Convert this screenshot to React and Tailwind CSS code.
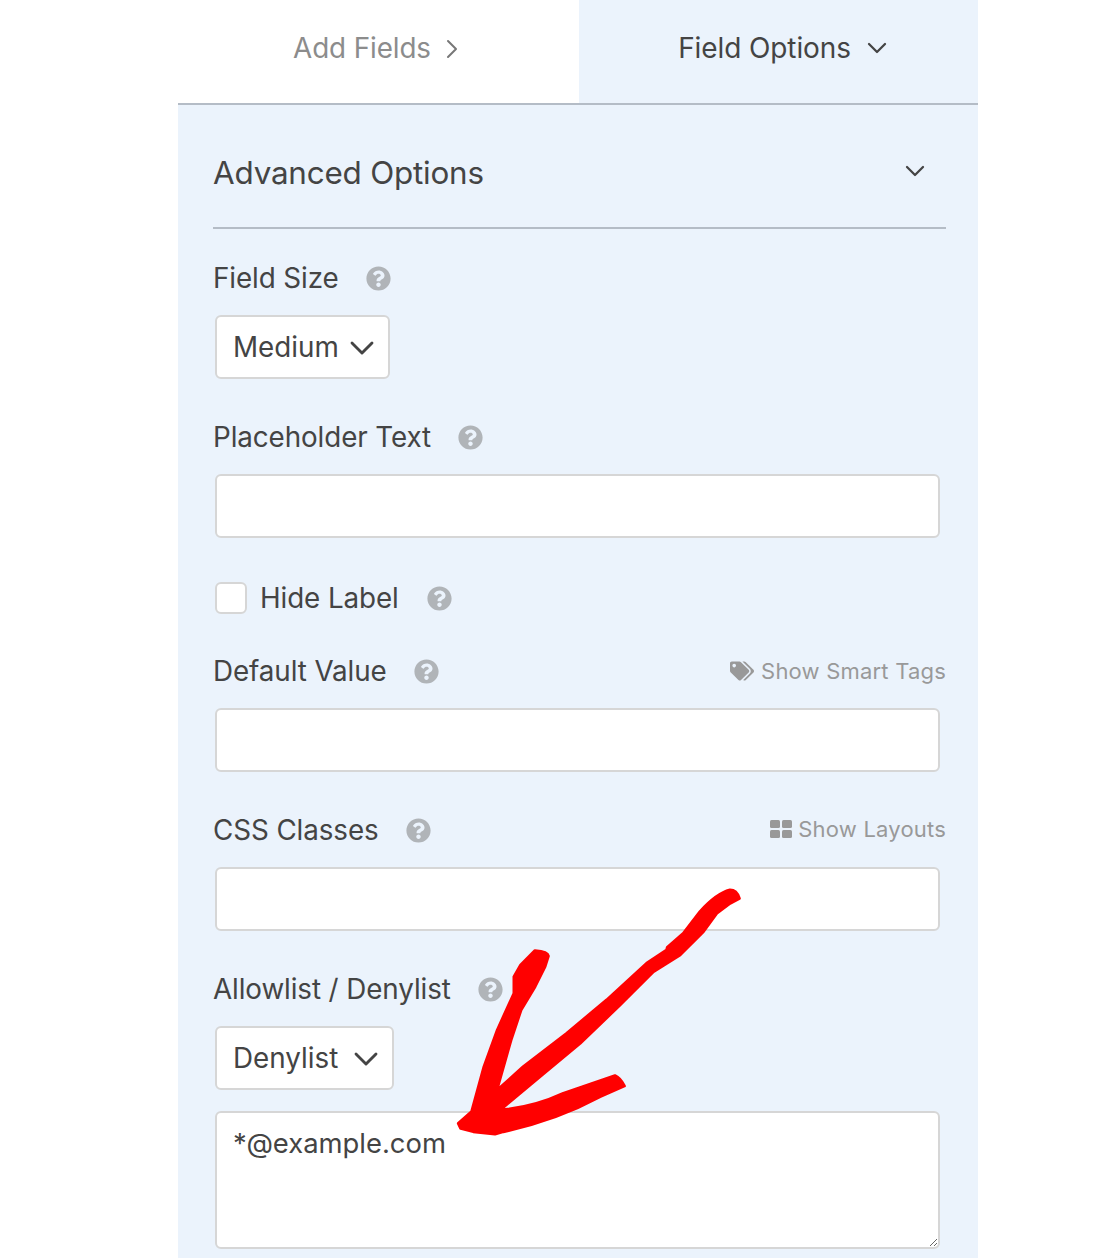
import { ChevronDown, ChevronRight } from 'lucide-react';
import { FaQuestionCircle, FaTags } from 'react-icons/fa';

const font = { fontFamily: 'Inter, "Liberation Sans", sans-serif' };

const Label = ({ children, right }) => (
  <div className="flex h-8 items-center justify-between">
    <div className="flex items-center">
      <span className="pt-[1px] text-[27.8px] tracking-[-0.1px] text-[#444444]">{children}</span>
      <FaQuestionCircle className="ml-[27px] h-[25px] w-[25px] text-[#b0b4b8]" />
    </div>
    {right}
  </div>
);

const TextBox = () => (
  <input
    type="text"
    className="mx-[2px] block h-16 w-[725px] rounded-md border-2 border-[#d6d6d6] bg-white"
  />
);

const SelectBox = ({ width, children }) => (
  <div className={`${width} mx-[2px] flex h-16 items-center justify-between rounded-md border-2 border-[#d6d6d6] bg-white pl-[16px] pr-[6px] text-[27.8px] text-[#444444]`}>
    <span className="pt-[1px]">{children}</span>
    <ChevronDown className="mt-[2px] h-10 w-10 text-[#444444]" strokeWidth={1.7} />
  </div>
);

const HandArrow = () => (
  <svg className="absolute left-[262px] top-[870px] h-[280px] w-[320px]" viewBox="0 0 960 840" fill="#ff0000" stroke="#ff0000" strokeWidth="9" strokeLinejoin="round">
    <path d="M285 242 Q323 244 325 258 L315 290 L285 350 L243 420 L213 510 L170 662 L250 590 L380 490 L500 390 L620 280 L680 240 L682 232 L730 190 L780 125 Q830 70 870 60 Q890 60 898 85 L870 100 L830 130 L790 185 L720 255 L640 305 L540 405 L420 520 L300 620 L180 720 Q280 712 370 670 L525 617 Q541 624 553 648 L480 680 Q350 750 190 785 L165 792 L100 785 L62 775 L55 760 L95 725 L132 590 L172 480 L222 370 L222 320 L242 285 Z" />
  </svg>
);

const App = () => {
  return (
    <div className="min-h-[1258px] bg-white" style={font}>
      <div className="relative ml-[178px] h-[1258px] w-[800px] overflow-hidden">
        {/* tabs */}
        <div className="flex h-[105px] border-b-2 border-[#b4bcc6]">
          <div className="flex w-[401px] items-center justify-center gap-[5px] bg-white pb-[5px] pl-[4px] text-[27.8px] tracking-[-0.1px] text-[#8c8c8c]">
            <span>Add Fields</span>
            <ChevronRight className="h-8 w-8 text-[#777777]" strokeWidth={1.5} />
          </div>
          <div className="flex flex-1 items-center justify-center gap-[10px] bg-[#ebf3fc] pb-[7px] pl-[14px] text-[28px] tracking-[-0.1px] text-[#444444]">
            <span>Field Options</span>
            <ChevronDown className="h-8 w-8 text-[#444444]" strokeWidth={1.7} />
          </div>
        </div>

        <div className="h-[1153px] bg-[#ebf3fc] pl-[35px] pr-[32px]">
          <div className="flex h-[124px] items-center justify-between border-b-2 border-[#b4bcc6] pr-[15px] pt-[16px]">
            <h2 className="text-[31.4px] font-normal tracking-[-0.2px] text-[#444444]">Advanced Options</h2>
            <ChevronDown className="mb-[6px] h-8 w-8 text-[#444444]" strokeWidth={1.7} />
          </div>

          <div className="mt-[33px]">
            <Label>Field Size</Label>
          </div>
          <div className="mt-[21px]">
            <SelectBox width="w-[175px]">Medium</SelectBox>
          </div>

          <div className="mt-[42px]">
            <Label>Placeholder Text</Label>
          </div>
          <div className="mt-[21px]">
            <TextBox />
          </div>

          <div className="mx-[2px] mt-[44px] flex h-8 items-center">
            <span className="h-8 w-8 rounded-md border-2 border-[#d6d6d6] bg-white" />
            <span className="ml-[13px] pt-[1px] text-[27.8px] tracking-[-0.1px] text-[#444444]">Hide Label</span>
            <FaQuestionCircle className="ml-[28px] h-[25px] w-[25px] text-[#b0b4b8]" />
          </div>

          <div className="mt-[41px]">
            <Label
              right={
                <span className="flex items-center text-[22px] tracking-[0.2px] text-[#999999]">
                  <FaTags className="mr-[7px] h-[24px] w-[24px]" />
                  Show Smart Tags
                </span>
              }
            >
              Default Value
            </Label>
          </div>
          <div className="mt-[21px]">
            <TextBox />
          </div>

          <div className="mt-[42px]">
            <Label
              right={
                <span className="flex items-center pb-[2px] text-[22px] tracking-[0.2px] text-[#999999]">
                  <svg className="mr-[6px] h-[18px] w-[22px]" viewBox="0 0 22 18" fill="currentColor">
                    <rect x="0" y="0" width="10" height="8" rx="1.5" />
                    <rect x="12" y="0" width="10" height="8" rx="1.5" />
                    <rect x="0" y="10" width="10" height="8" rx="1.5" />
                    <rect x="12" y="10" width="10" height="8" rx="1.5" />
                  </svg>
                  Show Layouts
                </span>
              }
            >
              CSS Classes
            </Label>
          </div>
          <div className="mt-[21px]">
            <TextBox />
          </div>

          <div className="mt-[42px]">
            <Label>Allowlist / Denylist</Label>
          </div>
          <div className="mt-[21px]">
            <SelectBox width="w-[179px]">Denylist</SelectBox>
          </div>
          <textarea
            readOnly
            defaultValue="*@example.com"
            className="mx-[2px] mt-[21px] block h-[138px] w-[725px] rounded-md border-2 border-[#d6d6d6] bg-white px-[16px] py-[10px] text-[27.4px] text-[#444444] outline-none"
          />
        </div>

        <HandArrow />
      </div>
    </div>
  );
};

export default App;
